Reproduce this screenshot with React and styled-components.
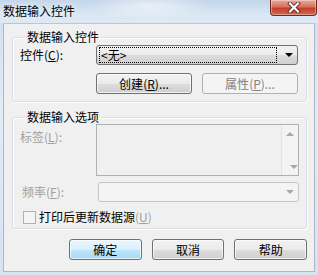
import React from 'react';
import styled, { createGlobalStyle } from 'styled-components';

const Global = createGlobalStyle`
  html, body { margin: 0; padding: 0; }
  body {
    font-family: "Noto Sans CJK SC", "Liberation Sans", sans-serif;
    font-size: 12px;
    background: #dfe8f3;
  }
`;

const Window = styled.div`
  width: 318px;
  height: 275px;
  display: flex;
  flex-direction: column;
  background: linear-gradient(180deg, #cfdeee 0%, #e2ebf6 40%, #d6e3f1 100%);
  overflow: hidden;
`;

const TitleBar = styled.div`
  height: 23px;
  display: flex;
  align-items: flex-start;
  justify-content: space-between;
  background:
    radial-gradient(ellipse 60px 14px at 150px 6px, rgba(255,255,255,0.55), rgba(255,255,255,0)),
    linear-gradient(180deg, #c3d6ea 0%, #d9e6f3 60%, #dfe9f5 100%);
`;

const TitleText = styled.div`
  padding: 4px 0 0 3px;
  line-height: 14px;
  color: #000;
  text-shadow: 0 0 6px rgba(255,255,255,0.9);
`;

const CloseBtn = styled.div`
  width: 47px;
  height: 16px;
  margin-right: 1px;
  border: 1px solid #6e2a22;
  border-top: none;
  border-radius: 0 0 4px 4px;
  box-sizing: border-box;
  background: linear-gradient(180deg, #e9a99c 0%, #d9705e 45%, #c2412c 55%, #d3664f 100%);
  box-shadow: inset 0 0 0 1px rgba(255,255,255,0.35);
  display: flex;
  align-items: center;
  justify-content: center;
`;

const Client = styled.div`
  flex: 1;
  margin: 0 3px 3px 3px;
  background: #f0f0f0;
  border: 1px solid #a9b8c8;
  border-top-color: #b9c7d6;
  box-sizing: border-box;
  display: flex;
  flex-direction: column;
  padding: 6px 7px 0 8px;
`;

const Group = styled.fieldset`
  margin: 0 0 ${p => p.$mb || 0}px 0;
  padding: ${p => p.$pt || 0}px 7px ${p => p.$pb || 0}px 7px;
  border: 1px solid #d5dfe5;
  border-radius: 3px;
  box-shadow: inset 1px 1px 0 #fff, 1px 1px 0 #fff;
  min-width: 0;
`;

const Legend = styled.legend`
  padding: 0 2px;
  margin-left: 5px;
  line-height: 14px;
  height: 14px;
  color: #000;
`;

const Row = styled.div`
  display: flex;
  align-items: ${p => p.$top ? 'flex-start' : 'center'};
  margin-top: ${p => p.$mt || 0}px;
  padding-left: ${p => p.$pl || 0}px;
`;

const Label = styled.div`
  width: ${p => p.$w || 76}px;
  line-height: 14px;
  color: ${p => p.$disabled ? '#a0a0a0' : '#000'};
  padding-top: ${p => p.$pt || 0}px;
  flex-shrink: 0;
`;

const Combo = styled.div`
  width: ${p => p.$w}px;
  height: 20px;
  box-sizing: border-box;
  border: 1px solid ${p => p.$disabled ? '#c5c5c5' : '#707070'};
  border-radius: 3px;
  background: ${p => p.$disabled
    ? '#f4f4f4'
    : 'linear-gradient(180deg, #f2f2f2 0%, #ebebeb 50%, #dddddd 51%, #cfcfcf 100%)'};
  display: flex;
  align-items: center;
  padding: 1px 4px 1px 2px;
  margin-left: ${p => p.$ml || 0}px;
`;

const FocusText = styled.div`
  flex: 1;
  height: 14px;
  line-height: 13px;
  border: 1px dotted #000;
  padding-left: 1px;
  margin-right: 8px;
`;

const Arrow = styled.div`
  margin-left: auto;
  width: 0;
  height: 0;
  border-left: 4px solid transparent;
  border-right: 4px solid transparent;
  border-top: 4px solid ${p => p.$c || '#000'};
`;

const ButtonRow = styled.div`
  display: flex;
  gap: ${p => p.$gap}px;
  margin-top: ${p => p.$mt || 0}px;
  margin-left: ${p => p.$ml || 0}px;
`;

const Button = styled.div`
  width: ${p => p.$w}px;
  height: 21px;
  box-sizing: border-box;
  border: 1px solid ${p => p.$default ? '#3c7fb1' : p.$disabled ? '#adb2b5' : '#707070'};
  border-radius: 3px;
  background: ${p => p.$default
    ? 'linear-gradient(180deg, #eaf6fd 0%, #d9f0fc 50%, #bee6fd 51%, #a7d9f5 100%)'
    : p.$disabled
      ? '#f4f4f4'
      : 'linear-gradient(180deg, #f2f2f2 0%, #ebebeb 50%, #dddddd 51%, #cfcfcf 100%)'};
  box-shadow: ${p => p.$disabled ? 'none' : 'inset 0 0 0 1px rgba(255,255,255,0.7)'};
  color: ${p => p.$disabled ? '#838383' : '#000'};
  display: flex;
  align-items: center;
  justify-content: center;
  line-height: 14px;
`;

const ListBox = styled.div`
  width: 206px;
  height: 52px;
  box-sizing: border-box;
  border: 1px solid #adb2b5;
  background: #f0f0f0;
  display: flex;
  justify-content: flex-end;
`;

const ScrollBar = styled.div`
  width: 17px;
  border-left: 1px solid #e3e3e3;
  background: #f3f3f3;
  display: flex;
  flex-direction: column;
  justify-content: space-between;
  align-items: center;
  padding: 7px 0 6px;
  box-sizing: border-box;
`;

const UpArrow = styled.div`
  width: 0;
  height: 0;
  border-left: 4px solid transparent;
  border-right: 4px solid transparent;
  border-bottom: 4px solid #a8a8a8;
`;

const Check = styled.div`
  width: 13px;
  height: 13px;
  box-sizing: border-box;
  border: 1px solid #b1b1b1;
  background: #f4f4f4;
  margin-right: 3px;
`;

const CheckLabel = styled.div`
  line-height: 14px;
  color: #000;
`;

const Mn = styled.span`
  color: ${p => p.$disabled ? '#a0a0a0' : 'inherit'};
  u { text-decoration: underline; text-underline-offset: 1px; }
`;

function Mnemonic({ k, disabled }) {
  return <Mn $disabled={disabled}>(<u>{k}</u>)</Mn>;
}

export default function App() {
  return (
    <>
      <Global />
      <Window>
        <TitleBar>
          <TitleText>数据输入控件</TitleText>
          <CloseBtn>
            <svg width="14" height="11" viewBox="0 0 14 11">
              <path d="M3 1.5 L11 9.5 M11 1.5 L3 9.5" stroke="#4a1b15" strokeWidth="3.8" strokeLinecap="square" />
              <path d="M3 1.5 L11 9.5 M11 1.5 L3 9.5" stroke="#fff" strokeWidth="2.2" strokeLinecap="square" />
            </svg>
          </CloseBtn>
        </TitleBar>
        <Client>
          <Group $pt={1} $pb={7} $mb={8}>
            <Legend>数据输入控件</Legend>
            <Row>
              <Label>控件<Mnemonic k="C" />:</Label>
              <Combo $w={202}>
                <FocusText>&lt;无&gt;</FocusText>
                <Arrow />
              </Combo>
            </Row>
            <ButtonRow $gap={10} $mt={8} $ml={76}>
              <Button $w={96}>创建<Mnemonic k="R" />...</Button>
              <Button $w={96} $disabled>属性<Mnemonic k="P" />...</Button>
            </ButtonRow>
          </Group>
          <Group $pt={0} $pb={4}>
            <Legend>数据输入选项</Legend>
            <Row $top>
              <Label $disabled $pt={6} $w={76}>标签<Mnemonic k="L" disabled />:</Label>
              <ListBox>
                <ScrollBar>
                  <UpArrow />
                  <Arrow $c="#a8a8a8" />
                </ScrollBar>
              </ListBox>
            </Row>
            <Row $mt={6} $pl={2}>
              <Label $disabled $w={76}>频率<Mnemonic k="F" disabled />:</Label>
              <Combo $w={205} $disabled>
                <Arrow $c="#a8a8a8" />
              </Combo>
            </Row>
            <Row $mt={8} $pl={3}>
              <Check />
              <CheckLabel>打印后更新数据源<Mnemonic k="U" disabled /></CheckLabel>
            </Row>
          </Group>
          <ButtonRow $gap={10} $mt={10} $ml={57}>
            <Button $w={73} $default>确定</Button>
            <Button $w={73}>取消</Button>
            <Button $w={73}>帮助</Button>
          </ButtonRow>
        </Client>
      </Window>
    </>
  );
}
